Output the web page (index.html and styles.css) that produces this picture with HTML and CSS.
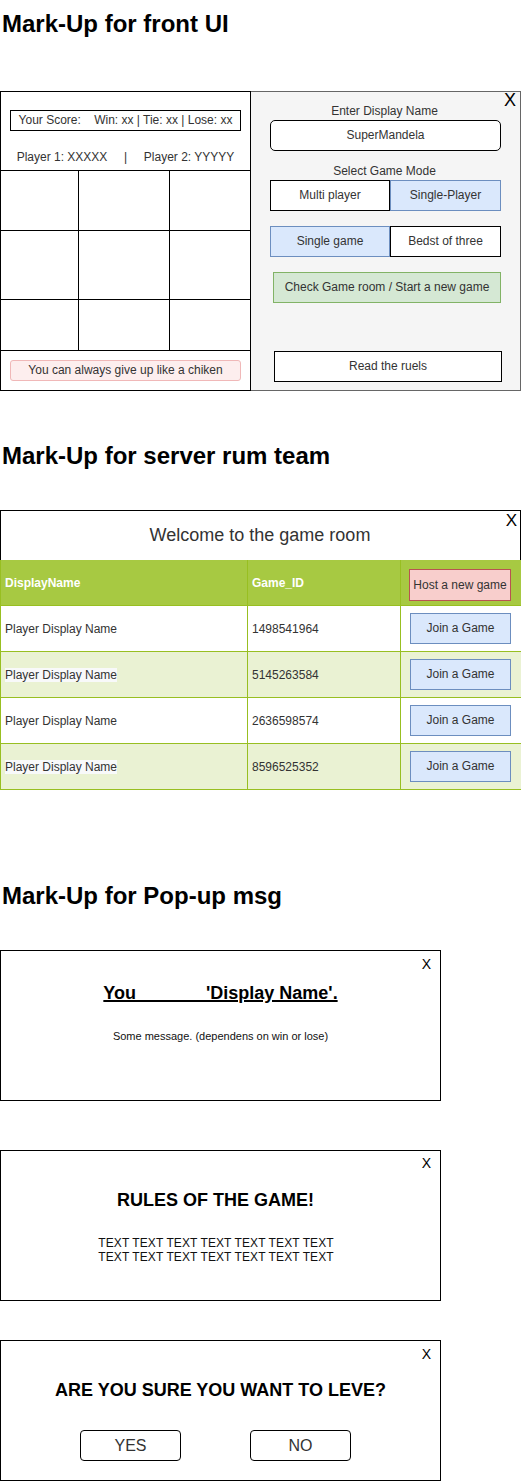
FILE: index.html
```html
<!DOCTYPE html>
<html>
<head>
<meta charset="utf-8">
<link rel="stylesheet" href="styles.css">
</head>
<body>
<h1 class="title title-first">Mark-Up for front UI</h1>

<div class="front">
  <div class="board-panel">
    <div class="score-box">Your Score:    Win: xx | Tie: xx | Lose: xx</div>
    <div class="players">Player 1: XXXXX     |     Player 2: YYYYY</div>
    <div class="grid">
      <div class="cell r1"></div><div class="cell r1"></div><div class="cell r1 last"></div>
      <div class="cell r2"></div><div class="cell r2"></div><div class="cell r2 last"></div>
      <div class="cell r3"></div><div class="cell r3"></div><div class="cell r3 last"></div>
    </div>
    <div class="giveup">You can always give up like a chiken</div>
  </div>
  <div class="menu-panel">
    <span class="close close-lg">X</span>
    <div class="label label-first">Enter Display Name</div>
    <div class="name-input">SuperMandela</div>
    <div class="label label-mode">Select Game Mode</div>
    <div class="toggle">
      <div class="opt opt-left">Multi player</div>
      <div class="opt opt-right opt-on">Single-Player</div>
    </div>
    <div class="toggle toggle-second">
      <div class="opt opt-left opt-on">Single game</div>
      <div class="opt opt-right">Bedst of three</div>
    </div>
    <div class="btn-green">Check Game room / Start a new game</div>
    <div class="btn-rules">Read the ruels</div>
  </div>
</div>

<h1 class="title title-second">Mark-Up for server rum team</h1>

<div class="room">
  <div class="room-head">
    <span class="close close-md">X</span>
    Welcome to the game room
  </div>
  <div class="row row-header">
    <div class="c c1">DisplayName</div>
    <div class="c c2">Game_ID</div>
    <div class="c c3 c3-head"><div class="btn-host">Host a new game</div></div>
  </div>
  <div class="row">
    <div class="c c1">Player Display Name</div>
    <div class="c c2">1498541964</div>
    <div class="c c3"><div class="btn-join">Join a Game</div></div>
  </div>
  <div class="row row-alt">
    <div class="c c1"><span class="hl">Player Display Name</span></div>
    <div class="c c2">5145263584</div>
    <div class="c c3"><div class="btn-join">Join a Game</div></div>
  </div>
  <div class="row">
    <div class="c c1">Player Display Name</div>
    <div class="c c2">2636598574</div>
    <div class="c c3"><div class="btn-join">Join a Game</div></div>
  </div>
  <div class="row row-alt">
    <div class="c c1"><span class="hl">Player Display Name</span></div>
    <div class="c c2">8596525352</div>
    <div class="c c3"><div class="btn-join">Join a Game</div></div>
  </div>
</div>

<h1 class="title title-third">Mark-Up for Pop-up msg</h1>

<div class="popup popup-result">
  <span class="close close-sm">X</span>
  <div class="pop-title"><u>You              'Display Name'.</u></div>
  <div class="pop-msg">Some message. (dependens on win or lose)</div>
</div>

<div class="popup popup-rules">
  <span class="close close-sm">X</span>
  <div class="pop-title pop-title-rules">RULES OF THE GAME!</div>
  <div class="pop-text">TEXT TEXT TEXT TEXT TEXT TEXT TEXT<br>TEXT TEXT TEXT TEXT TEXT TEXT TEXT</div>
</div>

<div class="popup popup-leave">
  <span class="close close-sm">X</span>
  <div class="pop-title pop-title-leave">ARE YOU SURE YOU WANT TO LEVE?</div>
  <div class="pop-buttons">
    <div class="pop-btn">YES</div>
    <div class="pop-btn">NO</div>
  </div>
</div>
</body>
</html>
```

FILE: styles.css
```css
* { box-sizing: border-box; }

body {
  margin: 0;
  font-family: "Liberation Sans", Arial, sans-serif;
  color: #333;
  background: #fff;
  width: 521px;
}

.title {
  margin: 0;
  padding-left: 2px;
  font-size: 24px;
  line-height: 28px;
  font-weight: bold;
  color: #000;
}
.title-first { margin-top: 10px; }
.title-second { margin-top: 51px; }
.title-third { margin-top: 92px; }

/* ---------- front UI ---------- */
.front {
  display: flex;
  margin-top: 53px;
  height: 300px;
}

.board-panel {
  width: 251px;
  border: 1px solid #000;
  display: flex;
  flex-direction: column;
  background: #fff;
}

.score-box {
  margin: 18px 0 0 9px;
  width: 231px;
  height: 21px;
  border: 1px solid #000;
  font-size: 12px;
  line-height: 19px;
  text-align: center;
  white-space: pre;
}

.players {
  margin-top: 18px;
  font-size: 12px;
  line-height: 16px;
  text-align: center;
  white-space: pre;
}

.grid {
  margin-top: 5px;
  border-top: 1px solid #000;
  display: grid;
  grid-template-columns: 78px 91px 80px;
}
.cell {
  border-right: 1px solid #000;
  border-bottom: 1px solid #000;
}
.cell.last { border-right: none; }
.r1 { height: 60px; }
.r2 { height: 69px; }
.r3 { height: 51px; }

.giveup {
  margin: 9px 0 0 9px;
  width: 231px;
  height: 21px;
  background: #fdeeee;
  border: 1px solid #f0b8b8;
  border-radius: 3px;
  font-size: 12px;
  line-height: 19px;
  text-align: center;
}

.menu-panel {
  position: relative;
  width: 270px;
  border: 1px solid #666;
  border-left: none;
  background: #f5f5f5;
  display: flex;
  flex-direction: column;
  align-items: flex-start;
}

.close {
  position: absolute;
  font-weight: normal;
  color: #000;
}
.close-lg { top: -1px; right: 4px; font-size: 18px; line-height: 18px; }
.close-md { top: 1px; right: 3px; font-size: 17px; line-height: 17px; }
.close-sm { top: 6px; right: 9px; font-size: 14px; line-height: 14px; }

.label {
  align-self: stretch;
  padding-right: 2px;
  font-size: 12px;
  line-height: 14px;
  text-align: center;
}
.label-first { margin-top: 12px; }
.label-mode { margin-top: 13px; }

.name-input {
  margin: 2px 0 0 19px;
  width: 231px;
  height: 31px;
  background: #fff;
  border: 1px solid #000;
  border-radius: 5px;
  font-size: 12px;
  line-height: 29px;
  text-align: center;
}

.toggle {
  display: flex;
  margin: 2px 0 0 19px;
  width: 231px;
  height: 31px;
}
.toggle-second { margin-top: 15px; }
.opt {
  height: 31px;
  font-size: 12px;
  line-height: 29px;
  text-align: center;
  background: #fff;
  border: 1px solid #000;
}
.opt-left { width: 120px; }
.opt-right { width: 111px; }
.opt-on {
  background: #dae8fc;
  border-color: #6c8ebf;
}

.btn-green {
  margin: 15px 0 0 22px;
  width: 228px;
  height: 31px;
  background: #d5e8d4;
  border: 1px solid #82b366;
  font-size: 12px;
  line-height: 29px;
  text-align: center;
}

.btn-rules {
  margin: 48px 0 0 23px;
  width: 228px;
  height: 31px;
  background: #fff;
  border: 1px solid #000;
  font-size: 12px;
  line-height: 29px;
  text-align: center;
}

/* ---------- game room ---------- */
.room {
  margin-top: 40px;
  width: 521px;
}
.room-head {
  position: relative;
  height: 50px;
  border: 1px solid #000;
  border-bottom: none;
  font-size: 18px;
  line-height: 48px;
  text-align: center;
  padding-right: 1px;
}

.row {
  display: grid;
  grid-template-columns: 247px 153px 121px;
  height: 46px;
  background: #fff;
}
.row-alt { background: #eaf2d3; }
.row-header { background: #a7c942; }

.c {
  border-left: 1px solid #98bf21;
  border-bottom: 1px solid #98bf21;
  font-size: 12px;
  display: flex;
  align-items: center;
  padding-left: 4px;
}
.row-header .c {
  color: #fff;
  font-weight: bold;
}
.c3 {
  padding-left: 9px;
}
.c3-head {
  align-items: flex-start;
  padding-top: 9px;
  padding-left: 8px;
}
.hl { background: #f8f9fa; }

.btn-host {
  width: 102px;
  height: 32px;
  background: #f8cecc;
  border: 1px solid #b85450;
  color: #333;
  font-weight: normal;
  font-size: 12px;
  line-height: 30px;
  text-align: center;
}
.btn-join {
  width: 101px;
  height: 31px;
  background: #dae8fc;
  border: 1px solid #6c8ebf;
  font-size: 12px;
  line-height: 29px;
  text-align: center;
}

/* ---------- popups ---------- */
.popup {
  position: relative;
  width: 441px;
  border: 1px solid #000;
  text-align: center;
  color: #000;
}
.popup-result { margin-top: 40px; height: 151px; padding-top: 31px; }
.popup-rules { margin-top: 49px; height: 151px; padding-top: 38px; }
.popup-leave { margin-top: 39px; height: 141px; padding-top: 38px; }

.popup-rules .close-sm { top: 5px; }

.pop-title {
  font-size: 18px;
  line-height: 22px;
  font-weight: bold;
  white-space: pre;
}
.pop-title-rules { padding-right: 10px; }
.pop-title u { text-decoration-thickness: 1.5px; }

.pop-msg {
  margin-top: 25px;
  font-size: 11px;
  line-height: 14px;
  color: #111;
}

.pop-text {
  margin-top: 25px;
  padding-right: 9px;
  font-size: 12px;
  line-height: 14px;
  letter-spacing: 0.1px;
  color: #111;
}

.pop-buttons {
  display: flex;
  gap: 69px;
  padding-left: 79px;
  margin-top: 29px;
}
.pop-btn {
  width: 101px;
  height: 31px;
  border: 1px solid #000;
  border-radius: 4px;
  font-size: 16px;
  line-height: 29px;
  text-align: center;
  color: #333;
}
```
